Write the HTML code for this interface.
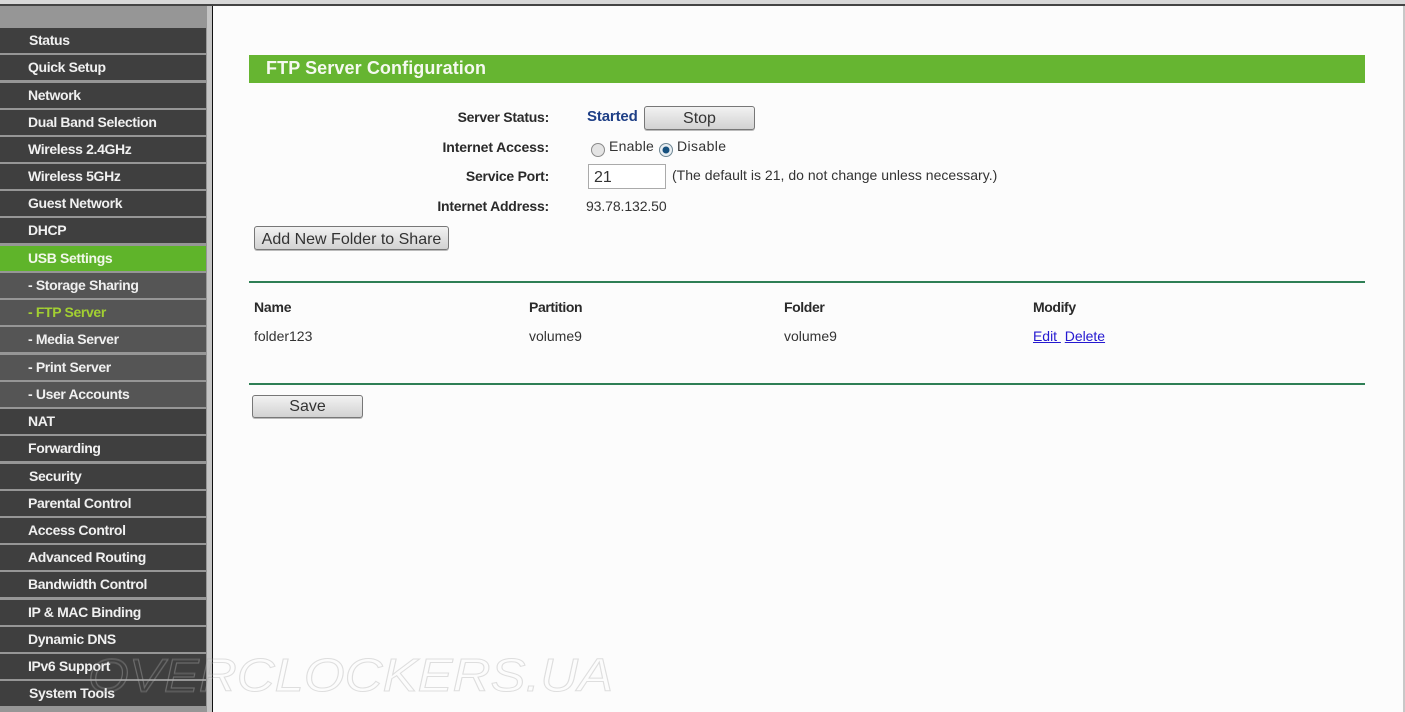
<!DOCTYPE html>
<html><head><meta charset="utf-8">
<style>
html,body{margin:0;padding:0;width:1405px;height:712px;overflow:hidden;background:#fcfcfc;font-family:"Liberation Sans",sans-serif;color:#222}
.a{position:absolute;white-space:nowrap}
#top{left:0;top:0;width:1405px;height:4px;background:#d8d8d8}
#top2{left:0;top:4px;width:1405px;height:2px;background:#444}
#side{left:0;top:6px;width:207px;height:706px;background:#969696}
#strip{left:207px;top:6px;width:5px;height:706px;background:#c4c4c4}
#blk{left:212px;top:6px;width:1px;height:706px;background:#111}
#rs{left:1403px;top:6px;width:2px;height:706px;background:#c8c8c8}
.m{position:absolute;left:0;width:178px;padding-left:28px;height:25px;background:#3f3f3f;color:#f0f0f0;font-size:14px;font-weight:bold;line-height:25px;letter-spacing:-.36px;white-space:nowrap}
.m.s{background:#555}
.m.g{background:#5fb42a;color:#f2f8ea}
.m.y{color:#a2cf32}
.l{font-size:14px;font-weight:bold;color:#2a2a2a;text-align:right;width:200px;left:349px;letter-spacing:-.25px}
.t{font-size:14px;color:#333}
.b{font-size:14px;font-weight:bold;color:#2a2a2a;letter-spacing:-.4px}
.btn{position:absolute;box-sizing:border-box;border:1px solid #777;border-radius:3px;background:linear-gradient(#f2f2f2,#d2d2d2);color:#333;font-size:16px;text-align:center;box-shadow:0 1px 0 #bbb}
.hr{position:absolute;left:249px;width:1116px;height:2px;background:#2f7f55}
a{color:#2418d0;text-decoration:underline}
</style></head><body>
<div class="a" id="top"></div><div class="a" id="top2"></div>
<div class="a" id="side"></div><div class="a" id="strip"></div><div class="a" id="blk"></div><div class="a" id="rs"></div>

<div class="m" style="top:28px;padding-left:29px;width:177px">Status</div>
<div class="m" style="top:55px">Quick Setup</div>
<div class="m" style="top:83px">Network</div>
<div class="m" style="top:110px">Dual Band Selection</div>
<div class="m" style="top:137px">Wireless 2.4GHz</div>
<div class="m" style="top:164px">Wireless 5GHz</div>
<div class="m" style="top:191px">Guest Network</div>
<div class="m" style="top:218px">DHCP</div>
<div class="m g" style="top:246px">USB Settings</div>
<div class="m s" style="top:273px">- Storage Sharing</div>
<div class="m s y" style="top:300px">- FTP Server</div>
<div class="m s" style="top:327px">- Media Server</div>
<div class="m s" style="top:355px">- Print Server</div>
<div class="m s" style="top:382px">- User Accounts</div>
<div class="m" style="top:409px">NAT</div>
<div class="m" style="top:436px">Forwarding</div>
<div class="m" style="top:464px;padding-left:29px;width:177px">Security</div>
<div class="m" style="top:491px">Parental Control</div>
<div class="m" style="top:518px">Access Control</div>
<div class="m" style="top:545px">Advanced Routing</div>
<div class="m" style="top:572px">Bandwidth Control</div>
<div class="m" style="top:600px">IP &amp; MAC Binding</div>
<div class="m" style="top:627px">Dynamic DNS</div>
<div class="m" style="top:654px">IPv6 Support</div>
<div class="m" style="top:681px;padding-left:29px;width:177px">System Tools</div>

<div class="a" style="left:249px;top:55px;width:1116px;height:28px;background:#66b531"></div>
<div class="a" style="left:266px;top:55px;height:27px;line-height:27px;font-size:18px;font-weight:bold;color:#f5f9f0;letter-spacing:.1px">FTP Server Configuration</div>

<div class="a l" style="top:109px">Server Status:</div>
<div class="a l" style="top:139px;letter-spacing:-.12px">Internet Access:</div>
<div class="a l" style="top:168px">Service Port:</div>
<div class="a l" style="top:198px;letter-spacing:-.22px">Internet Address:</div>

<div class="a" style="left:587px;top:108px;font-size:15px;font-weight:bold;color:#1e3f86;letter-spacing:-.15px">Started</div>
<div class="btn" style="left:644px;top:106px;width:111px;height:24px;line-height:23px">Stop</div>

<svg class="a" style="left:590px;top:141px" width="16" height="17"><circle cx="8" cy="9" r="6.5" fill="#e4e4e4" stroke="#8a8a8a"/></svg>
<div class="a t" style="left:609px;top:138px;letter-spacing:.25px">Enable</div>
<svg class="a" style="left:658px;top:141px" width="16" height="17"><circle cx="8" cy="9" r="6.5" fill="#e8eef2" stroke="#6f8794"/><circle cx="8" cy="9" r="3.5" fill="#15507e"/></svg>
<div class="a t" style="left:677px;top:138px;letter-spacing:.4px">Disable</div>

<div class="a" style="left:588px;top:164px;width:78px;height:25px;box-sizing:border-box;border:1px solid #aaa;background:#fff;font-size:16px;line-height:25px;padding-left:5px;color:#333">21</div>
<div class="a t" style="left:672px;top:167px;letter-spacing:.02px">(The default is 21, do not change unless necessary.)</div>
<div class="a t" style="left:586px;top:198px;letter-spacing:-.1px">93.78.132.50</div>

<div class="btn" style="left:254px;top:226px;width:195px;height:24px;line-height:25px">Add New Folder to Share</div>

<div class="hr" style="top:281px"></div>
<div class="a b" style="left:254px;top:299px;letter-spacing:-.2px">Name</div>
<div class="a b" style="left:529px;top:299px">Partition</div>
<div class="a b" style="left:784px;top:299px">Folder</div>
<div class="a b" style="left:1033px;top:299px">Modify</div>
<div class="a t" style="left:254px;top:328px">folder123</div>
<div class="a t" style="left:529px;top:328px">volume9</div>
<div class="a t" style="left:784px;top:328px">volume9</div>
<div class="a t" style="left:1033px;top:328px;letter-spacing:-.03px"><a>Edit&nbsp;</a> <a>Delete</a></div>
<div class="hr" style="top:383px"></div>
<div class="btn" style="left:252px;top:395px;width:111px;height:23px;line-height:21px">Save</div>

<svg class="a" style="left:0;top:640px" width="640" height="72">
<text x="88" y="52" font-family="Liberation Sans, sans-serif" font-size="46" font-style="italic" fill="none" stroke="#ffffff" stroke-opacity=".14" stroke-width="1" textLength="525" lengthAdjust="spacingAndGlyphs">OVERCLOCKERS.UA</text>
<text x="88" y="51" font-family="Liberation Sans, sans-serif" font-size="46" font-style="italic" fill="none" stroke="#999999" stroke-opacity=".3" stroke-width="1" textLength="525" lengthAdjust="spacingAndGlyphs">OVERCLOCKERS.UA</text>
</svg>
</body></html>
